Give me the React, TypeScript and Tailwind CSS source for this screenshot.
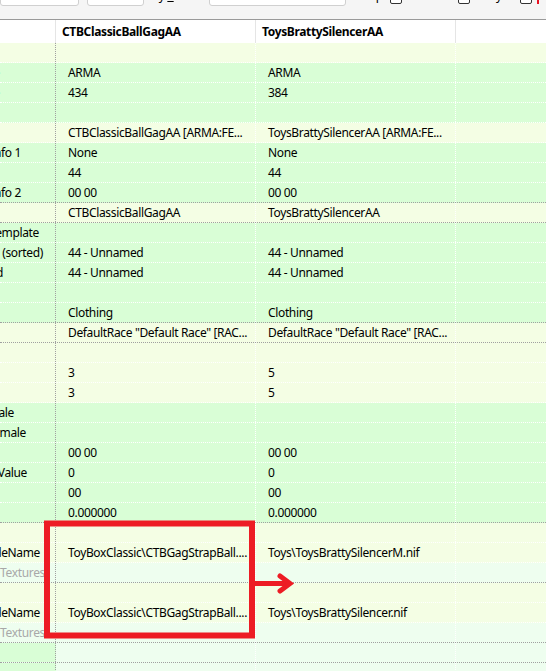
import React from 'react';

type Row = {
  label?: string;
  end?: string;
  a?: string;
  b?: string;
  bg: string;
  lbg?: string;
  line?: string;
  dim?: boolean;
};

const G = 'bg-[#d9fed6]';
const Y = 'bg-[#f4fee4]';
const L = 'bg-[#eefeef]';
const W = 'border-b-white';
const D = 'border-b-[#a0a0a0]';

const rows: Row[] = [
  { bg: Y },
  { label: 'Signature', end: 'w-[0px]', a: 'ARMA', b: 'ARMA', bg: G },
  { label: 'Data Size', end: 'w-[0px]', a: '434', b: '384', bg: G },
  { bg: G },
  { a: 'CTBClassicBallGagAA [ARMA:FE...', b: 'ToysBrattySilencerAA [ARMA:FE...', bg: Y },
  { label: 'Version Control Info 1', end: 'w-[21px]', a: 'None', b: 'None', bg: G },
  { a: '44', b: '44', bg: G },
  { label: 'Version Control Info 2', end: 'w-[21px]', a: '00 00', b: '00 00', bg: G, line: D },
  { a: 'CTBClassicBallGagAA', b: 'ToysBrattySilencerAA', bg: Y, line: D },
  { label: 'BOD2 - Biped Body Template', end: 'w-[39px]', bg: G },
  { label: 'First Person Flags (sorted)', end: 'w-[43px]', a: '44 - Unnamed', b: '44 - Unnamed', bg: G },
  { label: 'First Person Flags Unsorted', end: 'w-[3px]', a: '44 - Unnamed', b: '44 - Unnamed', bg: G },
  { bg: G },
  { a: 'Clothing', b: 'Clothing', bg: G, line: D },
  { a: 'DefaultRace "Default Race" [RAC...', b: 'DefaultRace "Default Race" [RAC...', bg: Y, line: D },
  { bg: Y },
  { a: '3', b: '5', bg: Y },
  { a: '3', b: '5', bg: Y },
  { label: 'Weight slider - Male', end: 'w-[14px]', bg: G },
  { label: 'Weight slider - Female', end: 'w-[26px]', bg: G },
  { a: '00 00', b: '00 00', bg: G },
  { label: 'Detection Sound Value', end: 'w-[27px]', a: '0', b: '0', bg: G },
  { a: '00', b: '00', bg: G },
  { a: '0.000000', b: '0.000000', bg: G, line: D },
  { bg: Y },
  { label: 'MOD2 - Model FileName', end: 'w-[40px]', a: 'ToyBoxClassic\\CTBGagStrapBall....', b: 'Toys\\ToysBrattySilencerM.nif', bg: Y },
  { label: 'MO2S - Alternate Textures', end: 'w-[45px]', bg: L, dim: true, line: D },
  { bg: Y },
  { label: 'MOD3 - Model FileName', end: 'w-[40px]', a: 'ToyBoxClassic\\CTBGagStrapBall....', b: 'Toys\\ToysBrattySilencer.nif', bg: Y },
  { label: 'MO3S - Alternate Textures', end: 'w-[45px]', bg: L, dim: true, line: D },
  { bg: L, lbg: G, line: D },
  { bg: L, lbg: G },
];

const Cell = ({ text, w }: { text?: string; w: string }) => (
  <div className={`${w} shrink-0 h-full flex items-center pl-[12px] overflow-hidden whitespace-nowrap border-r border-dotted border-r-white`}>
    {text}
  </div>
);

export default function App() {
  return (
    <div
      className="relative w-[546px] h-[671px] overflow-hidden bg-white text-[12px] tracking-[-0.35px] text-black"
      style={{ fontFamily: '"Noto Sans", "Open Sans", sans-serif' }}
    >
      {/* toolbar, mostly scrolled off the top */}
      <div className="h-[20px] bg-[#f5f5f5] border-b border-[#9a9a9a] flex items-start overflow-hidden">
        <div className="w-[79px] h-[30px] mt-[-24px] bg-white border border-[#d0d0d0] rounded-[3px] shrink-0" />
        <div className="w-[57px] h-[30px] mt-[-24px] ml-[8px] bg-white border border-[#d0d0d0] rounded-[3px] shrink-0" />
        <div className="ml-[8px] mt-[-13px] whitespace-nowrap text-[12px]">
          by <span className="underline">E</span>ditor
        </div>
        <div className="w-[137px] h-[30px] mt-[-24px] ml-[10px] bg-white border border-[#d0d0d0] rounded-[3px] shrink-0" />
        <div className="ml-[10px] mt-[-13px] whitespace-nowrap">Keep</div>
        <div className="w-[12px] h-[12px] mt-[-8px] ml-[7px] border border-[#333] rounded-[2px] bg-white shrink-0" />
        <div className="w-[12px] h-[12px] mt-[-8px] ml-[56px] border border-[#333] rounded-[2px] bg-white shrink-0" />
        <div className="ml-[26px] mt-[-13px] whitespace-nowrap">y</div>
        <div className="w-[12px] h-[12px] mt-[-8px] ml-[18px] border border-[#333] rounded-[2px] bg-white shrink-0" />
        <div className="w-[2px] h-[4px] ml-[5px] bg-[#e81123] shrink-0" />
      </div>

      {/* column header */}
      <div className="h-[23px] flex bg-white font-bold">
        <div className="w-[56px] shrink-0 border-r border-[#e5e5e5]" />
        <div className="w-[200px] shrink-0 pl-[6px] flex items-center border-r border-[#e5e5e5]">CTBClassicBallGagAA</div>
        <div className="w-[200px] shrink-0 pl-[6px] flex items-center border-r border-[#e5e5e5]">ToysBrattySilencerAA</div>
        <div className="flex-1" />
      </div>

      {/* record rows */}
      {rows.map((r, i) => (
        <div key={i} className={`h-[20px] flex border-b border-dotted ${r.line ?? W} ${r.bg}`}>
          <div className={`w-[56px] shrink-0 h-full flex items-center border-r border-dotted border-r-[#a0a0a0] ${r.lbg ?? ''}`}>
            <div className="w-[45px] overflow-hidden flex">
              {r.label && (
                <div className={`flex justify-end shrink-0 ${r.end}`}>
                  <span className={`whitespace-nowrap shrink-0 ${r.dim ? 'text-[#a8a8a8]' : ''}`}>{r.label}</span>
                </div>
              )}
            </div>
          </div>
          <Cell text={r.a} w="w-[200px]" />
          <Cell text={r.b} w="w-[200px]" />
          <div className="flex-1" />
        </div>
      ))}

      {/* red annotation drawn over the grid */}
      <svg className="absolute left-0 top-0 pointer-events-none" width="546" height="671">
        <rect x="47" y="523.5" width="205" height="112" fill="none" stroke="#ed1c24" strokeWidth="6" />
        <line x1="255" y1="583.5" x2="289" y2="583.5" stroke="#ed1c24" strokeWidth="5" />
        <polyline points="280,576 290,583.5 280,591" fill="none" stroke="#ed1c24" strokeWidth="5" strokeLinecap="round" />
      </svg>
    </div>
  );
}
